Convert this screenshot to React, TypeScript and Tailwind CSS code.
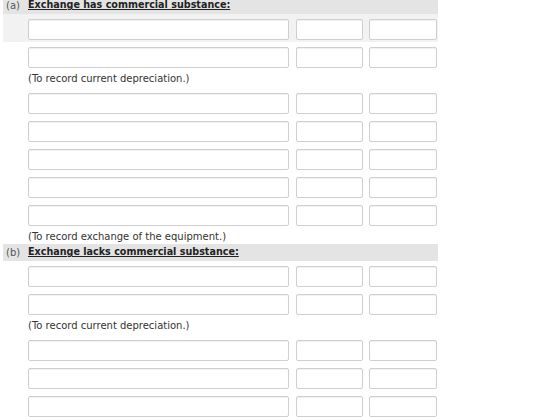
import React from 'react';

type Block =
  | { kind: 'header'; tag: string; label: string }
  | { kind: 'row'; shaded?: boolean }
  | { kind: 'note'; text: string; short?: boolean };

const blocks: Block[] = [
  { kind: 'header', tag: '(a)', label: 'Exchange has commercial substance:' },
  { kind: 'row', shaded: true },
  { kind: 'row' },
  { kind: 'note', text: '(To record current depreciation.)' },
  { kind: 'row' },
  { kind: 'row' },
  { kind: 'row' },
  { kind: 'row' },
  { kind: 'row' },
  { kind: 'note', text: '(To record exchange of the equipment.)', short: true },
  { kind: 'header', tag: '(b)', label: 'Exchange lacks commercial substance:' },
  { kind: 'row' },
  { kind: 'row' },
  { kind: 'note', text: '(To record current depreciation.)' },
  { kind: 'row' },
  { kind: 'row' },
  { kind: 'row' },
];

const inputCls =
  'h-[21px] rounded-[2px] border border-[#cfcfcf] bg-white shadow-[inset_0_1px_1px_rgba(0,0,0,0.06)] outline-none';

function EntryRow({ shaded }: { shaded?: boolean }) {
  return (
    <div className={`flex h-[28px] items-start pt-[5px] pl-[25px] ${shaded ? 'bg-[#f2f2f2]' : ''}`}>
      <input className={`${inputCls} w-[261px]`} />
      <input className={`${inputCls} ml-[7px] w-[67px]`} />
      <input className={`${inputCls} ml-[6px] w-[68px]`} />
    </div>
  );
}

export default function App() {
  return (
    <div
      className="min-h-[417px] w-[560px] overflow-hidden bg-white text-[10px] text-[#333]"
      style={{ fontFamily: '"DejaVu Sans", Verdana, sans-serif' }}
    >
      <div className="-mt-[3px] ml-[3px] w-[435px]">
        {blocks.map((b, i) => {
          if (b.kind === 'header') {
            return (
              <div key={i} className="flex h-[17px] items-center bg-[#e4e4e4]">
                <span className="w-[25px] pl-[3px] text-[#555]">{b.tag}</span>
                <span className="text-[9.6px] font-bold text-[#222] underline">{b.label}</span>
              </div>
            );
          }
          if (b.kind === 'note') {
            return (
              <div key={i} className={`${b.short ? 'h-[16px]' : 'h-[18px]'} pl-[25px] pt-[1px] leading-[15px]`}>
                {b.text}
              </div>
            );
          }
          return <EntryRow key={i} shaded={b.shaded} />;
        })}
      </div>
    </div>
  );
}
